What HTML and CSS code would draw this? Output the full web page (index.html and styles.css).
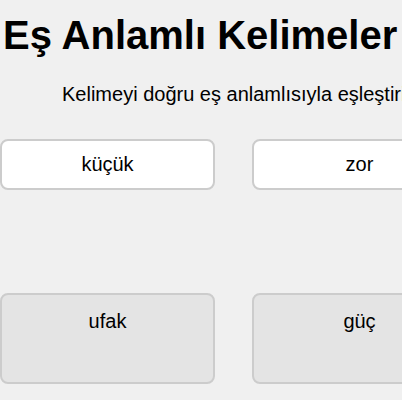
FILE: index.html
```html
<!DOCTYPE html>
<html lang="tr">
<head>
<meta charset="utf-8">
<link rel="stylesheet" href="styles.css">
</head>
<body>
<div class="page">
  <h1 class="title">Eş Anlamlı Kelimeler</h1>
  <p class="subtitle">Kelimeyi doğru eş anlamlısıyla eşleştirin.</p>
  <div class="row words">
    <div class="card word">küçük</div>
    <div class="card word">zor</div>
  </div>
  <div class="row targets">
    <div class="card target">ufak</div>
    <div class="card target">güç</div>
  </div>
</div>
</body>
</html>
```
FILE: styles.css
```css
html, body {
  margin: 0;
  padding: 0;
  background: #f0f0f0;
  overflow: hidden;
}
.page {
  width: 402px;
  height: 400px;
  overflow: hidden;
  font-family: "Liberation Sans", Arial, sans-serif;
  color: #000;
}
.title {
  margin: 0;
  padding: 12px 0 0 3px;
  font-size: 40px;
  font-weight: bold;
  line-height: 46px;
  white-space: nowrap;
}
.subtitle {
  margin: 0;
  padding: 25px 0 0 62px;
  font-size: 20px;
  line-height: 22px;
  white-space: nowrap;
}
.row {
  display: flex;
  gap: 37px;
  width: 600px;
}
.words {
  margin-top: 34px;
}
.targets {
  margin-top: 103px;
}
.card {
  flex: none;
  width: 215px;
  box-sizing: border-box;
  border: 2px solid #cccccc;
  border-radius: 8px;
  font-size: 20px;
  text-align: center;
}
.word {
  height: 51px;
  background: #ffffff;
  line-height: 47px;
}
.target {
  height: 91px;
  background: #e4e4e4;
  padding-top: 15px;
  line-height: 22px;
}
```
